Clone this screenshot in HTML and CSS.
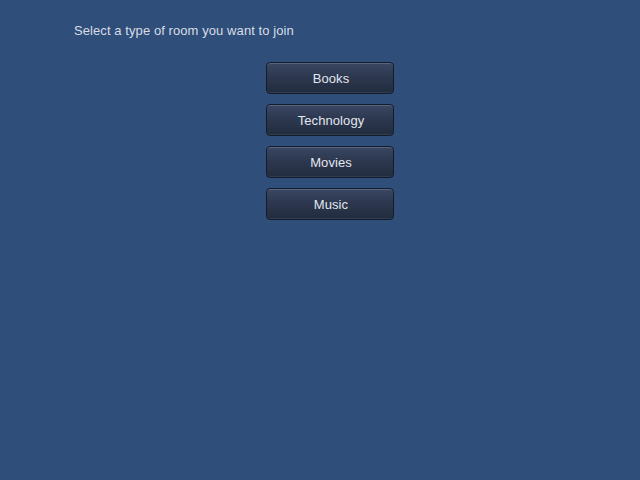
FILE: index.html
```html
<!DOCTYPE html>
<html>
<head>
<meta charset="utf-8">
<link rel="stylesheet" href="styles.css">
</head>
<body>
<div class="page">
  <p class="prompt">Select a type of room you want to join</p>
  <div class="rooms">
    <button class="room">Books</button>
    <button class="room">Technology</button>
    <button class="room">Movies</button>
    <button class="room">Music</button>
  </div>
</div>
</body>
</html>
```
FILE: styles.css
```css
html, body {
  margin: 0;
  padding: 0;
  background: #2f4e7a;
  width: 640px;
  height: 480px;
  overflow: hidden;
}
.page {
  padding: 23px 0 0 74px;
  font-family: "Liberation Sans", Arial, sans-serif;
}
.prompt {
  margin: 0;
  font-size: 13px;
  line-height: 16px;
  letter-spacing: 0.08px;
  color: #d8dde6;
}
.rooms {
  margin: 23px 0 0 192px;
  display: flex;
  flex-direction: column;
  gap: 10px;
}
.room {
  width: 128px;
  height: 32px;
  box-sizing: border-box;
  border: 1px solid #141c2a;
  border-radius: 4px;
  background: linear-gradient(#3a4762 0%, #2d3850 45%, #222c3e 100%);
  box-shadow: inset 0 1px 0 rgba(140,160,190,0.35), inset 0 -1px 0 rgba(90,110,140,0.25);
  color: #e2e6ee;
  font-family: "Liberation Sans", Arial, sans-serif;
  font-size: 13px;
  letter-spacing: 0.08px;
  padding: 0 0 0 2px;
  text-align: center;
}
```
